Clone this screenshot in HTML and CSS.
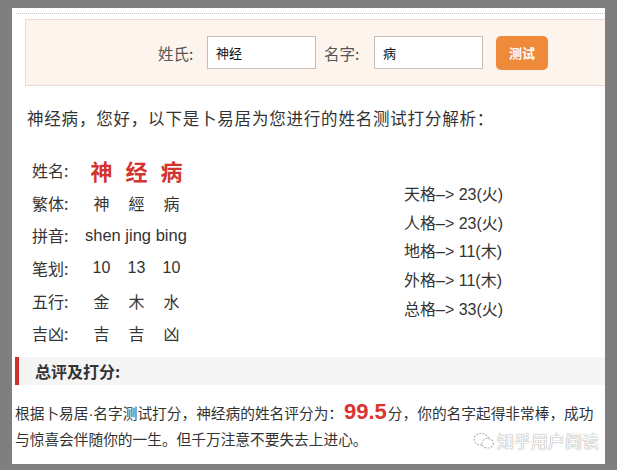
FILE: index.html
```html
<!DOCTYPE html>
<html lang="zh-CN">
<head>
<meta charset="utf-8">
<title>姓名测试打分</title>
<link rel="stylesheet" href="styles.css">
</head>
<body>
<div class="page">
  <div class="dots"></div>
  <div class="form">
    <span class="flabel">姓氏:</span>
    <span class="finput">神经</span>
    <span class="flabel flabel2">名字:</span>
    <span class="finput">病</span>
    <span class="btn">测试</span>
  </div>
  <p class="intro">神经病，您好，以下是卜易居为您进行的姓名测试打分解析：</p>
  <div class="info">
    <div class="grid">
      <span class="lab">姓名:</span><span class="big">神</span><span class="big">经</span><span class="big">病</span>
      <span class="lab">繁体:</span><span class="val">神</span><span class="val">經</span><span class="val">病</span>
      <span class="lab">拼音:</span><span class="val span3">shen jing bing</span>
      <span class="lab">笔划:</span><span class="val">10</span><span class="val">13</span><span class="val">10</span>
      <span class="lab">五行:</span><span class="val">金</span><span class="val">木</span><span class="val">水</span>
      <span class="lab">吉凶:</span><span class="val">吉</span><span class="val">吉</span><span class="val">凶</span>
    </div>
    <ul class="ge">
      <li>天格–&gt; 23(火)</li>
      <li>人格–&gt; 23(火)</li>
      <li>地格–&gt; 11(木)</li>
      <li>外格–&gt; 11(木)</li>
      <li>总格–&gt; 33(火)</li>
    </ul>
  </div>
  <h2 class="head">总评及打分:</h2>
  <p class="summary">根据卜易居·名字测试打分，神经病的姓名评分为：<span class="score">99.5</span>分，你的名字起得非常棒，成功与惊喜会伴随你的一生。但千万注意不要失去上进心。<span class="mark"><svg class="wx" viewBox="0 0 24 20" width="22" height="18"><ellipse cx="9" cy="8" rx="8" ry="6.5" fill="none" stroke="#999" stroke-width="1.2" stroke-dasharray="2 1.5"/><ellipse cx="16" cy="12.5" rx="6.5" ry="5.2" fill="#fff" stroke="#999" stroke-width="1.2" stroke-dasharray="2 1.5"/></svg>知乎用户阅读</span></p>
</div>
</body>
</html>
```
FILE: styles.css
```css
html, body {
  margin: 0;
  padding: 0;
  background: #7f7f7f;
}
body {
  font-family: "Liberation Sans", "Noto Sans CJK SC", sans-serif;
  color: #333;
}
.page {
  position: relative;
  margin: 8px 0 0 12px;
  width: 593px;
  height: 456px;
  background: #fff;
  overflow: hidden;
  padding-top: 5px;
  box-sizing: border-box;
}
.dots {
  margin-left: 4px;
  border-top: 1px dotted #c4c4c4;
}
.form {
  margin: 5px 0 0 13px;
  height: 67px;
  box-sizing: border-box;
  border: 1px solid #ecd8d2;
  border-right: none;
  background: #fdf4ee;
  display: flex;
  align-items: center;
  padding-left: 132px;
}
.flabel {
  width: 49px;
  font-size: 15.5px;
  color: #555;
  font-family: "Noto Sans CJK SC", sans-serif;
}
.flabel2 {
  width: 50px;
  margin-left: 8px;
}
.finput {
  width: 109px;
  height: 33px;
  box-sizing: border-box;
  border: 1px solid #c9beb6;
  background: #fff;
  font-size: 13px;
  color: #111;
  padding-left: 8px;
  display: flex;
  align-items: center;
  font-family: "Noto Sans CJK SC", sans-serif;
}
.btn {
  margin-left: 13px;
  width: 52px;
  height: 34px;
  border-radius: 5px;
  background: #f08a3b;
  color: #fff;
  font-weight: bold;
  font-size: 13px;
  display: flex;
  align-items: center;
  justify-content: center;
  font-family: "Noto Sans CJK SC", sans-serif;
}
.intro {
  margin: 20px 0 0 15px;
  font-size: 16.5px;
  line-height: 24px;
  letter-spacing: 0.8px;
  font-family: "Noto Sans CJK SC", sans-serif;
}
.info {
  margin-top: 24px;
  padding-left: 20px;
  display: flex;
  align-items: center;
}
.grid {
  display: grid;
  grid-template-columns: 52px 35px 35px 35px;
  grid-auto-rows: 32.6px;
  align-items: center;
  font-size: 16px;
}
.lab {
  font-family: "Noto Sans CJK SC", sans-serif;
}
.val {
  text-align: center;
}
.span3 {
  grid-column: span 3;
  text-align: left;
  padding-left: 1px;
  font-size: 16.5px;
}
.big {
  text-align: center;
  font-size: 22px;
  font-weight: bold;
  color: #d43430;
  font-family: "Noto Sans CJK SC", sans-serif;
}
.ge {
  list-style: none;
  margin: 2px 0 0 215px;
  padding: 0;
  font-size: 16px;
  line-height: 28.7px;
}
.head {
  margin: 7px 0 0 3px;
  height: 28px;
  line-height: 28px;
  background: #f5f5f5;
  border-left: 4px solid #d0302d;
  padding-left: 16px;
  font-size: 16px;
  font-weight: bold;
  color: #333;
  font-family: "Noto Sans CJK SC", sans-serif;
}
.summary {
  position: relative;
  margin: 14px 0 0 3px;
  padding-right: 4px;
  font-size: 14.7px;
  line-height: 26.5px;
}
.score {
  font-size: 22px;
  font-weight: bold;
  color: #dc3430;
  margin: 0 1px;
}
.mark {
  position: absolute;
  right: 6px;
  bottom: -1px;
  display: flex;
  align-items: center;
  gap: 2px;
  font-size: 17px;
  color: #fff;
  letter-spacing: 0;
  text-shadow: 0 0 1px #888, 0 0 1px #888;
  opacity: 0.8;
  font-family: "Noto Sans CJK SC", sans-serif;
}
.wx {
  flex: none;
}
```
